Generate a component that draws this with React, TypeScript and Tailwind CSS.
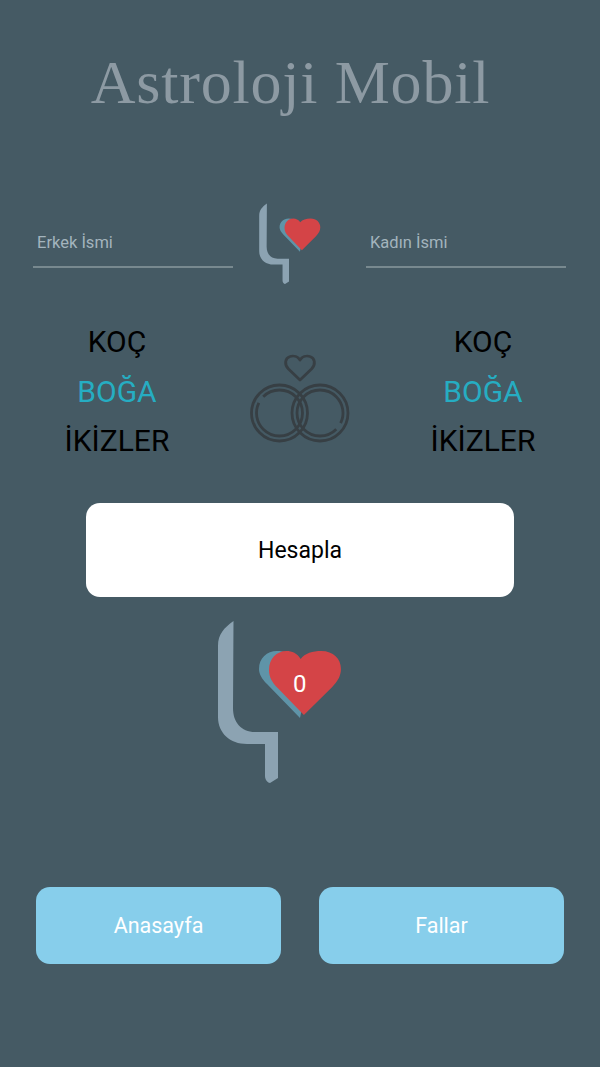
import React from "react";

const HOOK = "M15.5 1 C6 8 0 14 0 26 L0 97 C0 113 12 124 29 124 L47 124 L47 156 C47 160 50 163 52 163 L60 158 L60 112 L37 112 C23 112 15 102 15 88 Z";
const HEART = "M29 8 C26 3 21 1 16 1 C7 1 0 8 0 18 C0 24 3 29 8 34 L32 58 L58 33 C63 28 66 23 66 17 C66 8 59 1 48 1 C40 1 33 3 29 8 Z";

function LoveMark({ className }: { className: string }) {
  return (
    <svg viewBox="0 0 124 165" className={className}>
      <path d={HOOK} fill="#8CA3B2" />
      <path d="M82 98 L49 64 C44 59 41 54 41 49 C41 38 49 31 59 31 C66 31 72 33 76 38 L90 60 Z" fill="#5F94A8" />
      <g transform="translate(51 30) scale(1.09 1.12)">
        <path d={HEART} fill="#D44447" />
      </g>
    </svg>
  );
}

function Rings() {
  return (
    <svg viewBox="0 0 100 90" className="h-[90px] w-[100px]" fill="none" stroke="#373F44" strokeWidth="2.8">
      <path d="M50 26 L38.5 15 C34 10.5 35 4 40 2.5 C44 1.2 48 3 50 6 C52 3 56 1.2 60 2.5 C65 4 66 10.5 61.500 15 Z" strokeLinejoin="round" />
      <circle cx="29.500" cy="59" r="28" />
      <circle cx="70" cy="59" r="28" />
      <circle cx="29.500" cy="59" r="23" strokeDasharray="136 8.500" transform="rotate(-135 29.500 59)" />
      <circle cx="70" cy="59" r="23" strokeDasharray="136 8.500" transform="rotate(45 70 59)" />
    </svg>
  );
}

function Picker() {
  return (
    <div className="flex w-[234px] flex-col items-center text-[30px] leading-[49.5px] text-black">
      <span>KOÇ</span>
      <span className="text-[#26ADC2]">BOĞA</span>
      <span>İKİZLER</span>
    </div>
  );
}

function NameInput({ placeholder }: { placeholder: string }) {
  return (
    <input
      placeholder={placeholder}
      className="h-[47px] w-[200px] border-b-2 border-[#78898F] bg-transparent pr-[3px] pb-[3px] pl-[4px] text-[16.5px] outline-none placeholder:text-[#A3B4BD]"
    />
  );
}

export default function App() {
  return (
    <div
      className="flex h-[1067px] w-[600px] flex-col items-center overflow-hidden bg-[#455A64]"
      style={{ fontFamily: "Roboto, sans-serif" }}
      lang="tr"
    >
      <h1
        className="mt-[46px] mr-[19px] text-[62px] leading-[72px] tracking-[0.8px] text-[#8D9AA3]"
        style={{ fontFamily: '"Liberation Serif", serif' }}
      >
        Astroloji Mobil
      </h1>

      <div className="mt-[85px] flex h-[81px] w-[534px] items-start justify-between">
        <div className="mt-[18px]"><NameInput placeholder="Erkek İsmi" /></div>
        <LoveMark className="mr-[20px] h-[82px] w-[62px]" />
        <div className="mt-[18px] mr-[1px]"><NameInput placeholder="Kadın İsmi" /></div>
      </div>

      <div className="mt-[33px] flex w-full items-center justify-between">
        <Picker />
        <div className="mt-[16px]"><Rings /></div>
        <Picker />
      </div>

      <button className="mt-[37.5px] h-[94px] w-[428px] rounded-[14px] bg-white pt-[3px] text-[23px] text-black">
        Hesapla
      </button>

      <div className="relative mt-[23px] mr-[40px] h-[165px] w-[124px]">
        <LoveMark className="h-[165px] w-[124px]" />
        <span className="absolute left-[75px] top-[49px] text-[24px] leading-[30px] text-white">0</span>
      </div>

      <div className="mt-[102px] flex w-[528px] justify-between">
        <button className="h-[77px] w-[245px] rounded-[14px] bg-[#87CEEB] pt-[2px] text-[21.5px] text-white">Anasayfa</button>
        <button className="h-[77px] w-[245px] rounded-[14px] bg-[#87CEEB] pt-[2px] text-[21.5px] text-white">Fallar</button>
      </div>
    </div>
  );
}
